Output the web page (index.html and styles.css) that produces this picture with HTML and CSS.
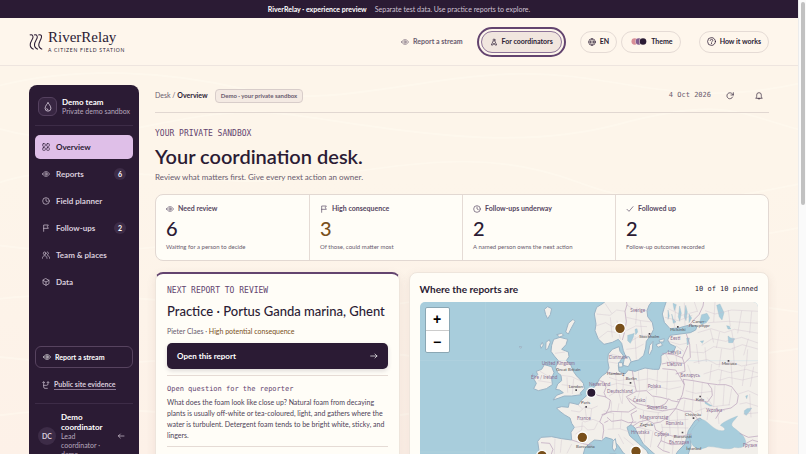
FILE: index.html
```html
<!DOCTYPE html>
<html lang="en">
<head>
<meta charset="utf-8">
<meta name="viewport" content="width=device-width, initial-scale=1">
<title>RiverRelay</title>
<link rel="stylesheet" href="styles.css">
</head>
<body>
<svg class="defs" aria-hidden="true">
  <symbol id="eye" viewBox="0 0 24 24"><path d="M1.5 12S5 5 12 5s10.500 7 10.500 7-3.500 7-10.500 7S1.500 12 1.500 12z"/><circle cx="12" cy="12" r="3.500"/></symbol>
  <symbol id="flag" viewBox="0 0 24 24"><path d="M5 22V3h14l-3 5 3 5H5"/></symbol>
  <symbol id="clock" viewBox="0 0 24 24"><circle cx="12" cy="12" r="10"/><path d="M12 6v6l4 2"/></symbol>
</svg>
<div class="page">
  <svg class="waves" viewBox="0 0 800 400" preserveAspectRatio="none" aria-hidden="true">
    <path d="M0 20C80 0 170 5 250 25S420 10 520 8s160 40 290 8M0 65c100 30 180-30 290-15s220 40 330 10 120-10 190 8M0 120c90-30 200 10 310-5s180-30 270 5 150 15 230 0M0 185c140 20 250-20 360-15s240 40 450-5M0 240c120-15 280 25 400 5s280-10 410 10M0 300c160 20 300-20 420 0s260 10 390-10M0 360c140-20 280 20 400 0s260-10 410 10"/>
  </svg>
  <div class="banner"><strong>RiverRelay · experience preview</strong><span>Separate test data. Use practice reports to explore.</span></div>
  <header class="header">
    <a class="brand" href="#">
      <svg class="brand-mark" viewBox="0 0 39 45" aria-hidden="true"><path d="M2 3c9-3 11 5 7 12S0 29 5 37q3 5 8 6M14 3c9-3 11 5 7 12s-9 14-4 22q3 5 8 6M26 3c9-3 11 3 7 12s-9 14-4 22q3 5 8 6"/></svg>
      <span class="brand-text"><span class="brand-name">RiverRelay</span><span class="brand-tag">A CITIZEN FIELD STATION</span></span>
    </a>
    <nav class="top-nav" aria-label="Site">
      <a class="nav-link" href="#"><svg class="icon"><use href="#eye"/></svg>Report a stream</a>
      <a class="pill pill-active" href="#"><svg class="icon" viewBox="0 0 24 24"><circle cx="12" cy="6" r="3"/><path d="M9 10 4 21h5l3-6 3 6h5l-5-11"/></svg>For coordinators</a>
      <div class="pill-group">
        <button class="pill" type="button"><svg class="icon" viewBox="0 0 24 24"><circle cx="12" cy="12" r="10"/><path d="M2 12h20M12 2c-6 6-6 14 0 20M12 2c6 6 6 14 0 20"/></svg>EN</button>
        <button class="pill pill-theme" type="button"><svg class="swatches" viewBox="0 0 45 20" aria-hidden="true"><circle cx="10" cy="10" r="9" fill="#d98e97"/><circle cx="22" cy="10" r="10" fill="#fef7ed"/><circle cx="22" cy="10" r="9" fill="#815b8d"/><circle cx="34" cy="10" r="11" fill="#fef7ed"/><circle cx="34" cy="10" r="9.500" fill="#2b1b34"/></svg>Theme</button>
      </div>
      <button class="pill" type="button"><svg class="icon icon-help" viewBox="0 0 24 24"><circle cx="12" cy="12" r="10.500"/><path d="M8.500 9c0-4 7-4 7 0 0 2.500-3.500 2.500-3.500 5M12 17v1"/></svg>How it works</button>
    </nav>
  </header>

  <div class="layout">
    <aside class="sidebar">
      <div class="team">
        <span class="team-icon"><svg class="icon" viewBox="0 0 24 24"><path d="M12 2s-7 7-7 13a7 7 0 0 0 14 0c0-6-7-13-7-13zM9 16q0 3 3 3"/></svg></span>
        <div><strong>Demo team</strong><span>Private demo sandbox</span></div>
      </div>
      <nav class="side-nav" aria-label="Desk">
        <a class="current" href="#"><svg class="icon" viewBox="0 0 24 24"><rect x="2" y="2" width="8" height="8" rx="2"/><rect x="14" y="2" width="8" height="8" rx="2"/><rect x="2" y="14" width="8" height="8" rx="2"/><rect x="14" y="14" width="8" height="8" rx="2"/></svg>Overview</a>
        <a href="#"><svg class="icon"><use href="#eye"/></svg>Reports<span class="count">6</span></a>
        <a href="#"><svg class="icon"><use href="#clock"/></svg>Field planner</a>
        <a href="#"><svg class="icon"><use href="#flag"/></svg>Follow-ups<span class="count">2</span></a>
        <a href="#"><svg class="icon" viewBox="0 0 24 24"><circle cx="8" cy="7" r="4"/><path d="M1 22c0-11 14-11 14 0M16 3c5 0 5 8 0 8M17 14c4 0 6 4 6 8"/></svg>Team &amp; places</a>
        <a href="#"><svg class="icon" viewBox="0 0 24 24"><path d="M12 2l9 5v10l-9 5-9-5V7zM3 7l9 5 9-5M12 12v10"/></svg>Data</a>
      </nav>
      <div class="side-actions">
        <a class="side-report" href="#"><svg class="icon"><use href="#eye"/></svg>Report a stream</a>
        <a class="side-evidence" href="#"><svg class="icon" viewBox="0 0 24 24"><path d="M5 3v15q0 4 4 4h7M5 13h9q4 0 4-4V3M2 5l3-3 3 3M15 5l3-3 3 3"/></svg><span>Public site evidence</span></a>
      </div>
      <div class="user">
        <span class="avatar">DC</span>
        <div><strong>Demo coordinator</strong><span>Lead coordinator · demo</span></div>
        <button class="icon-button" type="button" aria-label="Leave"><svg class="icon" viewBox="0 0 24 24"><path d="M21 12H4M10 6l-6 6 6 6"/></svg></button>
      </div>
    </aside>

    <main class="main">
      <div class="topbar">
        <div class="crumbs"><a href="#">Desk</a> / <strong>Overview</strong></div>
        <span class="tag">Demo · your private sandbox</span>
        <time class="mono date" datetime="2026-10-04">4 Oct 2026</time>
        <button class="icon-button" type="button" aria-label="Refresh"><svg class="icon" viewBox="0 0 24 24"><path d="M20 15a9 9 0 1 1-1-9l3 3M22 2v7h-7"/></svg></button>
        <button class="icon-button" type="button" aria-label="Notifications"><svg class="icon" viewBox="0 0 24 24"><path d="M3 18c3-3 2-6 2-9a7 7 0 0 1 14 0c0 3-1 6 2 9zM9 19c0 4 6 4 6 0"/></svg></button>
      </div>
      <section class="intro">
        <p class="eyebrow">YOUR PRIVATE SANDBOX</p>
        <h1>Your coordination desk.</h1>
        <p class="lede">Review what matters first. Give every next action an owner.</p>
      </section>
      <section class="stats" aria-label="Summary">
        <article><h2><svg class="icon"><use href="#eye"/></svg>Need review</h2><strong>6</strong><p>Waiting for a person to decide</p></article>
        <article><h2><svg class="icon"><use href="#flag"/></svg>High consequence</h2><strong class="amber">3</strong><p>Of those, could matter most</p></article>
        <article><h2><svg class="icon"><use href="#clock"/></svg>Follow-ups underway</h2><strong>2</strong><p>A named person owns the next action</p></article>
        <article><h2><svg class="icon" viewBox="0 0 24 24"><path d="M3 13l6 6L21 5"/></svg>Followed up</h2><strong>2</strong><p>Follow-up outcomes recorded</p></article>
      </section>
      <div class="cards">
        <section class="card next">
          <p class="eyebrow">NEXT REPORT TO REVIEW</p>
          <h2>Practice · Portus Ganda marina, Ghent</h2>
          <p class="meta">Pieter Claes · <span>High potential consequence</span></p>
          <button class="open" type="button">Open this report<svg class="icon" viewBox="0 0 24 24"><path d="M2 12h19M15 6l6 6-6 6"/></svg></button>
          <div class="question">
            <h3 class="mono">Open question for the reporter</h3>
            <p>What does the foam look like close up? Natural foam from decaying plants is usually off-white or tea-coloured, light, and gathers where the water is turbulent. Detergent foam tends to be bright white, sticky, and lingers.</p>
          </div>
          <div class="question"></div>
        </section>
        <section class="card where">
          <div class="where-head"><h2>Where the reports are</h2><span class="mono">10 of 10 pinned</span></div>
          <div class="map">
            <svg class="map-art" viewBox="45 114 1017 600" preserveAspectRatio="xMinYMin slice" role="img" aria-label="Map of Europe">
              <g class="land">
                <path d="M390 730L396 600 402 560 398 532 408 520 440 518 470 524 500 528 498 505 508 490 500 478 495 462 478 452 462 440 455 432 470 428 490 430 493 416 504 418 520 422 528 410 548 392 560 378 576 360 583 345 592 335 605 326 612 312 608 290 610 270 622 256 642 248 645 262 656 276 646 290 640 305 642 322 660 330 670 318 690 322 720 312 745 316 762 316 768 296 768 275 790 262 805 266 812 248 795 240 788 228 795 214 825 210 856 206 872 198 876 186 850 184 820 192 795 194 778 175 772 150 778 130 788 100 1080 100 1080 730 900 730 888 600 860 580 850 570 858 545 855 520 866 492 892 468 885 462 870 470 850 500 840 540 820 560 800 590 765 585 745 567 715 540 698 510 690 492 678 482 666 490 674 515 700 538 725 560 745 600 690 590 655 567 640 545 622 526 602 520 590 530 568 528 555 538 540 552 535 570 515 590 500 730z"/>
                <path d="M615 100L594 118 575 130 568 150 573 180 570 200 580 225 597 241 622 235 640 226 650 238 655 260 664 282 670 297 684 292 700 288 716 274 722 252 724 232 738 212 746 196 742 176 728 158 726 140 732 124 750 100z"/>
                <path d="M446 226L465 220 488 226 483 242 470 256 490 264 492 278 484 290 497 302 505 322 515 336 524 345 535 358 538 374 525 388 530 392 500 396 478 396 462 402 444 408 455 394 475 386 464 378 452 376 458 360 470 350 468 334 458 326 452 310 460 290 448 276 438 262 440 244z"/>
                <path d="M418 302L440 308 447 326 440 342 442 362 424 374 400 380 386 374 394 358 386 344 398 332 394 322 410 316z"/>
                <path d="M418 136l10-8 12 6-4 18-8 12-6-12zM482 204l8-26 14-12 6 6-12 22-8 16zM455 212l15-4 6 6-12 5zM423 235l10-8 3 8-8 20-6 2zM406 245l6-10 3 8-7 10zM342 248l8 0-2 5zM658 282l14-4 6 14-8 16-16-4zM640 296l12 0 2 12-12 2zM730 268l4-24 10-12-2 24-8 16zM753 242l14-6 6 8-14 6zM762 228l16-4-2 10-12 0zM624 532l7-8 4 26-7 12-6-10zM614 570h20l2 40-20 6z"/>
              </g>
              <g class="water">
                <path d="M857 530C850 515 858 500 868 488L885 468C898 464 905 474 915 482 928 494 942 502 955 500 966 496 954 489 946 484 956 472 982 462 998 456 990 468 975 478 982 487 992 498 1018 510 1022 532 1022 548 1010 554 988 550 970 562 930 546 908 548 886 560 862 554 857 530z"/>
                <path d="M884 174l6-22 16-4 8 14-10 14-16 6zM935 124l10-4 12 26-6 22-8-10zM969 216l8 6 12 2-6 12-12 0zM668 214l14-4 6-2-4 14-8 16-8-8zM690 196l6-2 2 10-6 8zM845 222l8 0-2 18-4 4zM886 232l10-2-4 8zM965 185l8 2 4 8-8 0zM789 138l4 18-4 10zM804 118l4 22 6-18zM824 126l-4 32 4 14 5-24zM842 124l-4 34 5 12 4-26zM852 150l8 12-8 14zM800 150l5 16 8 8-8 4zM1018 440l8-6 14-2-6 10-10 12-6-4zM1022 396l6-2-3 10zM900 412l8 6 14 8-8 0-14-8z"/>
              </g>
              <path class="grid" d="M241 114v600M45 290h560M845 290h217M45 564h360"/>
              <g class="borders">
                <path d="M662 100l4 22-6 20 4 30-4 28-8 28M500 528l38 12 24 4M560 380l18 14 22 4 16 10-4 24-10 18-10 4-8 20 10 8 2 18-4 24M583 350l14 4 6 16-6 16 6 14M605 324l20 4 20 2M682 320l4 26 8 36-30 16 12 18 18 14-24 14-50-2-30 10M694 382l30-2 18 16 26 4 22 6-10 14-22 10-24-2-40-10-24-16M790 404l10 6 22 4-10 20-40 6-30-4-12-6M822 414l10-22 6-30-10-18-16-26-40-4M838 362l-4-16 30 4 44 8 12 16 2 20-14 20-32-4-40-8-20 6M770 300l30-6 38 4 2 24-28 8M772 268l36 4 24 10 6 16M838 298l18-18-2-40-10-30M832 282l16-36M848 190l16-20 18-18 12-26 4-26M908 358l30 4 24 0 18 6 20 26-4 24-18 14-30 6-16 26M812 434l26 8 20 0 16 18 8 12M812 434l-20 24-26 16-20 4-20-10-24 6-18 12M746 478l6 20 20 10 30 8 30 0 28-6M772 508l-4 22-10 18 16 12 20 6M768 530l30 12 40-2M730 476l-16 10-22 6M606 460l14 12 30-4 20 8 24-2M610 470l-12 6M408 536l26 2 10 18-8 22-4 60M676 484l8-14-6-20 18-10M1020 540l22-12 20 6M1004 508l26 12 30-4"/>
              </g>
              <g class="regions">
                <path d="M498 440l26 4 14-14 22 4 18-8M516 420l16 14M520 464l20 10 24-8 20 8M510 490l26-4 12 12 20-2 10-20M532 474l-2 24-18 12M540 430l4 30M560 434l-4 34M470 526l-4 40M450 524l-2 46M500 540l-14 28M480 264l-30 4M462 292l28 8M470 334l30 4 30 14M486 340l2 46M506 344l-4 46M470 362l50 6M405 322l34 20M400 350l38 6"/>
                <path d="M575 150l40 4 20-16 26 4M572 186l30-10 20 12 34-8M582 222l26-20 50 6M600 118l20 30M616 160l6 60M636 170l10 56M664 122l32 20 40-4M664 160l44 10 34 4M664 200l28-14 34 2M680 230l24-14 36-4M664 256l30-4 22-12M696 130l-4 50M706 170l6 50M690 216l4 70"/>
                <path d="M616 270l26 6M612 294l26 4M612 340l30 10 38-6M606 366l32-8 52 10M612 396l28-16 10 38M632 330l4 50M656 330l-4 90M700 322l4 58M728 314l-2 66M758 318l-4 76M694 350l40-6 36 10 60-4M730 380l30-12 32 8 36-8M788 320l-4 84M620 412l-2 36M642 418l-4 22M704 382l-10 34M724 398l-2 28M746 396l4 34M690 430l30 10 40 6 30-8M716 440l-4 40M760 446l-4 30M596 440l30 8M626 448l-2 46M650 444l-4 50M608 496l36-2 30 10M640 510l16 30M656 520l30 24"/>
                <path d="M790 134l40 20 46-12M780 160l40 10 42-16M812 130l-4 60M838 116l2 70M868 114l10 30M900 140l30 10 50-12 82 4M910 176l60-4 92 6M878 206l40-12 40 12 30-10 74 12M890 244l32-20 40 8 48-12 52 18M856 264l40 2 30-18 50 8 36-14 50 14M866 296l40-10 30 16 44-8 30 12 52-10M896 330l44-14 36 10 48-10 38 12M930 114l-4 60M970 138l6 50M1010 140l-12 68M1040 142l-6 66M916 196l10 40M944 204l-10 48M980 200l10 60M1030 224l-14 50M874 240l8 60M900 250l4 44M950 254l-8 56M984 250l4 54M1028 256l-4 50M920 300l-6 50M950 318l-6 42M978 296l4 66M1020 306l-8 60M1046 308l-10 60M940 350l32-10 40 8 50-12M1000 390l30-10 30 14M1004 420l20-4 38 12M1016 450l46-4M1034 390l4 70"/>
                <path d="M782 270l14 28M812 244l24 18M784 230l40 12 30-6M784 292l28 16M812 266l4 34M848 302l16 46M866 350l-4 60M892 356l-4 56M842 380l30 8 50-6M840 408l-4 30M864 410l-2 32M886 410l4 40M906 400l18 28 50-6M930 364l-4 64M958 362l-4 62M980 374l-8 50M870 444l30-12 60 8M910 440l-4 28M936 426l6 54M770 480l4 26M792 460l4 52M816 440l4 74M840 444l2 70M790 470l60-4M770 490l80 2M780 514l-4 46M806 520l-4 50M828 516l6 30M700 490l40 10M720 496l-2 40M744 500l-8 50"/>
              </g>
              <g class="labels">
                <text x="410" y="303">United Kingdom</text><text x="378" y="344">Éire / Ireland</text><text x="516" y="468">France</text><text x="552" y="366">Nederland</text>
                <text x="676" y="144">Sverige</text><text x="796" y="228">Eesti</text><text x="788" y="271">Latvija</text><text x="786" y="306">Lietuva</text><text x="826" y="338">Беларусь</text><text x="728" y="371">Polska</text><text x="606" y="388">Deutschland</text><text x="684" y="415">Česko</text><text x="725" y="436">Slovensko</text><text x="704" y="464">Magyarország</text><text x="782" y="484">România</text><text x="903" y="444">Україна</text><text x="678" y="511">Hrvatska</text><text x="748" y="516">Србија</text><text x="792" y="539">България</text><text x="612" y="284">Danmark</text><text x="1014" y="548">Грузия</text>
              </g>
              <g class="cities">
                <text x="491" y="371">London</text><text x="528" y="421">Paris</text><text x="513" y="552">Barcelona</text><text x="703" y="223">Stockholm</text><text x="796" y="201">Helsinki</text><text x="862" y="176">Санкт-</text><text x="852" y="189">Петербург</text><text x="950" y="304">Москва</text><text x="606" y="332">Hamburg</text><text x="662" y="349">Berlin</text><text x="872" y="412">Київ</text><text x="840" y="455">Chișinău</text><text x="704" y="487">Zagreb</text><text x="806" y="521">București</text><text x="844" y="559">İstanbul</text><text x="454" y="320">Great Britain</text>
                <path d="M511 376h5v5h-5zM541 426h5v5h-5zM731 207h5v5h-5zM816 186h5v5h-5zM968 288h5v5h-5zM674 354h5v5h-5zM883 395h5v5h-5zM863 460h5v5h-5zM830 503h5v5h-5z"/>
              </g>
              <g class="pins"><circle cx="645" cy="193" r="16"/><circle class="dark" cx="559" cy="386" r="14"/><circle cx="532" cy="520" r="16"/><circle cx="693" cy="562" r="16"/><circle cx="411" cy="575" r="16"/></g>
            </svg>
            <div class="zoom"><button type="button" aria-label="Zoom in">+</button><button type="button" aria-label="Zoom out">−</button></div>
          </div>
        </section>
      </div>
    </main>
  </div>
</div>
<div class="scroll-track" aria-hidden="true"><div class="scroll-thumb"></div></div>
</body>
</html>
```

FILE: styles.css
```css
:root {
  --ink: #2b1b34;
  --muted: #695b6e;
  --line: #e5dbd5;
  --paper: #fffdf7;
  --plum: #63446f;
  --amber: #79501b;
}
* { box-sizing: border-box; }
body {
  margin: 0;
  height: 100vh;
  overflow: hidden;
  display: flex;
  background: #fdf5ea;
  color: var(--ink);
  font: 7px/11px Lato, "Open Sans", sans-serif;
}
h1, h2, h3, p { margin: 0; }
a { color: inherit; text-decoration: none; }
button { font: inherit; color: inherit; background: none; border: 0; padding: 0; cursor: pointer; }
.defs { position: absolute; width: 0; height: 0; }
.icon { width: 8px; height: 8px; flex: none; fill: none; stroke: currentColor; stroke-width: 2; stroke-linecap: round; stroke-linejoin: round; }
.mono, .eyebrow { font-family: "DejaVu Sans Mono", "Liberation Mono", monospace; }

.page { position: relative; flex: 1; min-width: 0; background: linear-gradient(#fdf5ea 40%, #fdf1e8); }
.waves { position: absolute; left: 0; top: 66px; width: 100%; height: 388px; fill: none; stroke: #fffaf0; stroke-width: 2; opacity: 0.6; }
.scroll-track { width: 8px; padding: 2px 1px 0 2px; background: #fafafa; border-left: 1px solid #ececec; }
.scroll-thumb { height: 203px; border-radius: 3px; background: #c1c1c1; }

.banner { position: relative; height: 18px; display: flex; align-items: center; justify-content: center; gap: 8px; background: var(--ink); color: #cfc2d3; }
.banner strong { color: #fff; }

.header { position: relative; height: 48px; padding: 0 29px; display: flex; align-items: center; justify-content: space-between; border-bottom: 1px solid #eee5df; background: #fef6ec; }
.brand { display: flex; align-items: center; gap: 5px; }
.brand-mark { width: 14px; height: 16px; fill: none; stroke: var(--ink); stroke-width: 3; }
.brand-text { display: flex; flex-direction: column; }
.brand-name { font: 15px/17px "Liberation Serif", serif; }
.brand-tag { font-size: 5px; line-height: 9px; letter-spacing: 0.15em; }
.top-nav { display: flex; align-items: center; gap: 18px; font-weight: 700; }
.nav-link { display: flex; align-items: center; gap: 4px; color: var(--muted); }
.pill { height: 22px; padding: 0 7px; display: flex; align-items: center; gap: 4px; border: 1px solid var(--line); border-radius: 11px; font-weight: 700; }
.pill-active { padding: 0 8px; border-color: #8d7398; background: #f1e6df; outline: 2px solid var(--plum); outline-offset: 2px; }
.pill-group { display: flex; gap: 4px; }
.pill-theme { padding: 0 7px 0 9px; }
.swatches { width: 16px; height: 7px; }
.icon-help { width: 9px; height: 9px; }

.layout { position: relative; display: grid; grid-template-columns: 110px minmax(0, 1fr); gap: 16px; padding: 19px 29px 0; align-items: start; }

.sidebar { padding: 12px 6px; border-radius: 8px; background: var(--ink); color: #d9cddc; }
.team { display: flex; align-items: center; gap: 5px; margin: 0 0 9px; padding: 0 3px 9px; border-bottom: 1px solid #3d2c47; }
.team div, .user div { flex: 1; min-width: 0; }
.team strong, .user strong { display: block; color: #fff; line-height: 10px; font-size: 8px; }
.team div span, .user div span { display: block; color: #b7a8bd; line-height: 9px; }
.team-icon { width: 19px; height: 19px; display: grid; place-items: center; border: 1px solid #55415f; border-radius: 6px; background: #382642; }
.team-icon .icon { width: 10px; height: 10px; }
.side-nav { display: grid; gap: 3px; font-size: 8px; font-weight: 700; }
.side-nav a { height: 24px; padding: 0 7px; display: flex; align-items: center; gap: 6px; border-radius: 5px; }
.side-nav .current { background: #dfbfe8; color: var(--ink); }
.count { width: 12px; height: 12px; margin-left: auto; border-radius: 6px; background: #3d2c47; color: #fff; font-size: 7px; line-height: 12px; text-align: center; }
.side-actions { margin-top: 52px; padding-bottom: 7px; display: grid; gap: 6px; border-bottom: 1px solid #3d2c47; }
.side-report, .side-evidence { height: 22px; padding: 0 7px; display: flex; align-items: center; gap: 4px; font-weight: 700; }
.side-report { border: 1px solid #57435f; border-radius: 6px; color: #fff; }
.side-evidence span { border-bottom: 1px solid #8b7893; line-height: 9px; }
.user { display: flex; align-items: center; gap: 5px; padding: 8px 3px; }
.avatar { width: 18px; height: 18px; border-radius: 9px; background: #3d2c47; font-weight: 700; line-height: 18px; text-align: center; }
.user .icon-button { width: 18px; }

.topbar { display: flex; align-items: center; height: 28px; padding-bottom: 6px; border-bottom: 1px solid #e1d7d1; }
.crumbs { color: var(--muted); }
.crumbs strong { color: var(--ink); }
.tag { margin-left: 7px; padding: 0 5px; border: 1px solid #d8cdca; border-radius: 4px; background: #f4eae3; color: var(--muted); font-size: 6px; line-height: 12px; font-weight: 700; }
.date { margin-left: auto; margin-right: 9px; color: var(--muted); }
.icon-button { width: 20px; height: 20px; display: grid; place-items: center; }
.icon-button + .icon-button { margin-left: 9px; }

.intro { padding: 15px 0 11px; }
.eyebrow { color: var(--plum); font-size: 8px; line-height: 11px; }
h1 { margin-top: 3px; font-size: 20px; line-height: 28px; font-weight: 600; }
.lede { margin-top: 2px; color: var(--muted); font-size: 8px; line-height: 11px; }

.stats { display: grid; grid-template-columns: repeat(4, 1fr); border: 1px solid #e2d8d2; border-radius: 8px; background: var(--paper); }
.stats article { padding: 8px 10px; }
.stats article + article { border-left: 1px solid var(--line); }
.stats h2 { display: flex; align-items: center; gap: 4px; color: #554560; font-size: 7px; line-height: 11px; font-weight: 700; }
.stats strong { display: block; font-size: 20px; line-height: 28px; font-weight: 500; }
.stats .amber { color: var(--amber); }
.stats p { color: var(--muted); font-size: 6px; line-height: 10px; }

.cards { display: grid; grid-template-columns: 245fr 361fr; gap: 9px; margin-top: 11px; }
.card { min-width: 0; border: 1px solid #eee5dc; border-radius: 8px; background: var(--paper); box-shadow: 0 3px 10px #6b48471a; }
.next { padding: 11px 11px 20px; border-top: 2px solid var(--plum); }
.next h2 { margin-top: 5px; font-size: 13px; line-height: 20px; font-weight: 500; white-space: nowrap; }
.meta { margin-top: 5px; color: var(--muted); }
.meta span { color: var(--amber); }
.open { width: 100%; height: 26px; margin: 6px 0; padding: 0 10px; display: flex; align-items: center; justify-content: space-between; border-radius: 5px; background: var(--ink); color: #fff; font-size: 8px; font-weight: 700; box-shadow: 0 2px 4px #2b1b3426; }
.question { padding: 7px 0 5px; border-top: 1px solid var(--line); }
.question h3 { color: var(--plum); font-size: 7px; line-height: 12px; font-weight: 400; }
.question p { margin-top: 2px; color: #4d3d56; line-height: 11px; }
.where { padding: 10px; }
.where-head { display: flex; align-items: center; justify-content: space-between; margin-bottom: 7px; }
.where h2 { font-size: 10px; line-height: 12px; font-weight: 700; }

.map { position: relative; height: 200px; overflow: hidden; border-radius: 5px; background: #a8cddc; }
.map-art { display: block; width: 100%; height: 100%; }
.land { fill: #f2efea; stroke: #9bb4c6; stroke-width: 3; stroke-linejoin: round; }
.water { fill: #a8cddc; stroke: #9bb9c9; stroke-width: 1; }
.grid { fill: none; stroke: #bddae5; stroke-width: 1; }
.borders { fill: none; stroke: #b89fba; stroke-width: 2; }
.regions { fill: none; stroke: #c9bac7; stroke-width: 1; }
.labels { fill: #8b6f93; font-size: 14px; }
.cities { fill: #514a52; font-size: 13px; }
.pins { fill: var(--amber); stroke: #fff; stroke-width: 4; }
.pins .dark { fill: var(--ink); }
.zoom { position: absolute; left: 5px; top: 5px; width: 25px; border: 1px solid #8aa7b4; border-radius: 2px; background: #fff; }
.zoom button { display: block; width: 100%; height: 22px; font: 700 14px/22px "Liberation Sans", sans-serif; color: #000; }
.zoom button + button { border-top: 1px solid #ccc; }
```
